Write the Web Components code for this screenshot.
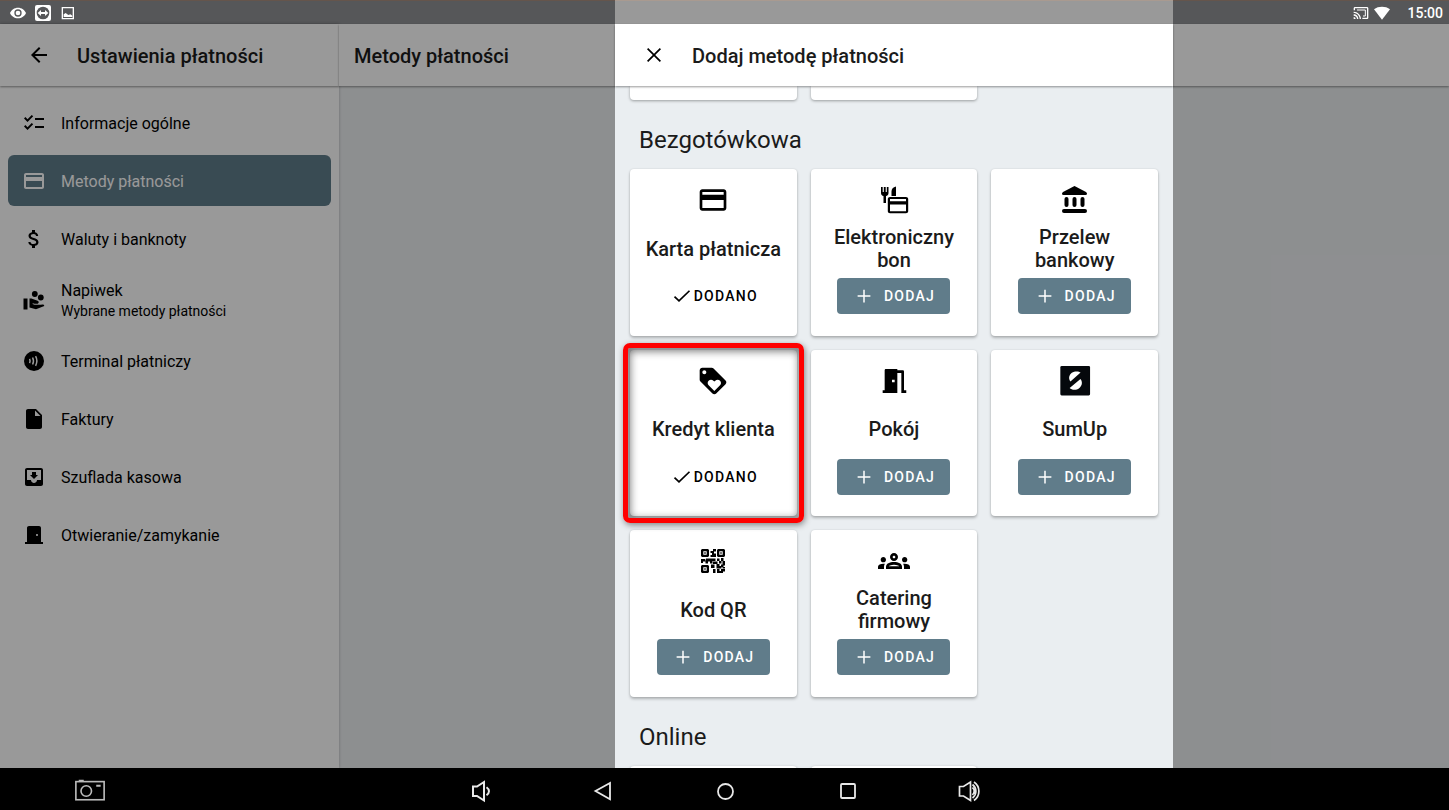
<!DOCTYPE html>
<html lang="pl">
<head>
<meta charset="utf-8">
<meta name="viewport" content="width=device-width, initial-scale=1">
<title>Ustawienia płatności</title>
<style>
    html, body {
        margin: 0;
        height: 100%;
        font-family: Roboto, "Noto Sans", sans-serif;
        color: #1b1b1b;
        background-color: #000;
    }
</style>
</head>
<body>
<pos-screen>
    <status-bar slot="status" time="15:00"></status-bar>

    <side-menu slot="menu">
        <title-bar slot="header" icon="back" action="Wstecz">Ustawienia płatności</title-bar>
        <menu-item icon="checklist">Informacje ogólne</menu-item>
        <menu-item icon="card" selected>Metody płatności</menu-item>
        <menu-item icon="dollar">Waluty i banknoty</menu-item>
        <menu-item icon="tip" note="Wybrane metody płatności">Napiwek</menu-item>
        <menu-item icon="contactless">Terminal płatniczy</menu-item>
        <menu-item icon="file">Faktury</menu-item>
        <menu-item icon="inbox">Szuflada kasowa</menu-item>
        <menu-item icon="door">Otwieranie/zamykanie</menu-item>
    </side-menu>

    <title-bar slot="page">Metody płatności</title-bar>

    <method-panel slot="panel">
        <title-bar slot="header" icon="close" action="Zamknij">Dodaj metodę płatności</title-bar>
        <card-edge side="bottom"></card-edge>
        <method-group label="Bezgotówkowa">
            <method-card icon="card" added>Karta płatnicza</method-card>
            <method-card icon="voucher">Elektroniczny bon</method-card>
            <method-card icon="bank">Przelew bankowy</method-card>
            <method-card icon="loyalty" added marked>Kredyt klienta</method-card>
            <method-card icon="room">Pokój</method-card>
            <method-card icon="sumup">SumUp</method-card>
            <method-card icon="qr">Kod QR</method-card>
            <method-card icon="groups">Catering firmowy</method-card>
        </method-group>
        <method-group label="Online"></method-group>
        <card-edge side="top"></card-edge>
    </method-panel>

    <system-nav slot="nav"></system-nav>
</pos-screen>

<script>
const ICONS = {
    back: `<path d="M20 11H7.83l5.59-5.59L12 4l-8 8 8 8 1.41-1.41L7.83 13H20v-2z"/>`,
    close: `<path d="M19 6.2 17.800 5 12 10.800 6.200 5 5 6.200 10.800 12 5 17.800 6.200 19 12 13.200 17.800 19 19 17.800 13.200 12z"/>`,
    checklist: `<path d="M22 7h-9v2h9V7zm0 8h-9v2h9v-2zM5.54 11 2 7.46l1.41-1.41 2.12 2.12 4.24-4.24 1.41 1.41L5.54 11zm0 8L2 15.46l1.41-1.41 2.12 2.12 4.24-4.24 1.41 1.41L5.54 19z"/>`,
    card: `<path d="M20 4H4c-1.11 0-1.99.89-1.99 2L2 18c0 1.11.89 2 2 2h16c1.11 0 2-.89 2-2V6c0-1.11-.89-2-2-2zm0 14H4v-6h16v6zm0-10H4V6h16v2z"/>`,
    dollar: `<path d="M11.8 10.9c-2.27-.59-3-1.2-3-2.15 0-1.09 1.01-1.85 2.7-1.85 1.78 0 2.44.85 2.5 2.1h2.21c-.07-1.72-1.12-3.3-3.21-3.81V3h-3v2.16c-1.94.42-3.5 1.68-3.5 3.61 0 2.31 1.91 3.46 4.7 4.13 2.5.6 3 1.48 3 2.41 0 .69-.49 1.79-2.7 1.79-2.06 0-2.87-.92-2.98-2.1h-2.2c.12 2.19 1.76 3.42 3.68 3.83V21h3v-2.15c1.95-.37 3.5-1.5 3.5-3.55 0-2.84-2.43-3.81-4.7-4.4z"/>`,
    tip: `<path d="M1.500 10.500h4v11h-4z"/><path d="M7.500 10.500h1.900l6.200 2.300c.7.300 1.100.8 1.100 1.500 0 .9-.7 1.500-1.600 1.500h-2.600l-1.700-.6-.3.900 2 .7h6.200l2-.3c.9 0 1.600.7 1.600 1.500l-8.300 3.300-6.500-1.800z"/><circle cx="12.800" cy="6" r="2.900"/><circle cx="18.800" cy="9.500" r="2.900"/>`,
    contactless: `<circle cx="12" cy="12" r="10"/><g fill="none" stroke="#fff" stroke-width="1.500"><path d="M7.600 9.900c.6 1.300.6 2.900 0 4.200M10.600 8.500c1.100 2.200 1.100 4.800 0 7M13.600 7.200c1.600 3 1.600 6.600 0 9.600"/></g>`,
    file: `<path d="M6 2c-1.1 0-1.99.9-1.99 2L4 20c0 1.1.89 2 1.99 2H18c1.1 0 2-.9 2-2V8l-6-6H6zm7 7V3.5L18.5 9H13z"/>`,
    inbox: `<path d="M19 3H4.99c-1.11 0-1.98.9-1.98 2L3 19c0 1.1.88 2 1.99 2H19c1.1 0 2-.9 2-2V5c0-1.1-.9-2-2-2zm0 12h-4c0 1.66-1.35 3-3 3s-3-1.34-3-3H4.99V5H19v10zm-3-5h-2V7h-4v3H8l4 4 4-4z"/>`,
    door: `<path d="M19 19V5c0-1.1-.9-2-2-2H7c-1.1 0-2 .9-2 2v14H3v2h18v-2h-2zm-4-6c-.55 0-1-.45-1-1s.45-1 1-1 1 .45 1 1-.45 1-1 1z"/>`,
    loyalty: `<path d="M21.41 11.58l-9-9C12.05 2.22 11.55 2 11 2H4c-1.1 0-2 .9-2 2v7c0 .55.22 1.05.59 1.42l9 9c.36.36.86.58 1.41.58.55 0 1.05-.22 1.41-.59l7-7c.37-.36.59-.86.59-1.41 0-.55-.23-1.06-.59-1.42zM5.5 7C4.67 7 4 6.33 4 5.5S4.67 4 5.5 4 7 4.67 7 5.5 6.33 7 5.5 7zm11.77 8.27L13 19.54l-4.27-4.27C8.28 14.81 8 14.19 8 13.5c0-1.38 1.12-2.5 2.5-2.5.69 0 1.32.28 1.77.74l.73.72.73-.73c.45-.45 1.08-.73 1.77-.73 1.38 0 2.5 1.12 2.5 2.5 0 .69-.28 1.32-.73 1.77z"/>`,
    room: `<path d="M14.500 6v15h-11v-2H5V4c0-.6.400-1 1-1h8.500v1h4c.6 0 1 .4 1 1v14h1.700v2h-3.700V6h-3zm-4 5v2h2v-2h-2z"/>`,
    groups: `<path d="M4 13c1.1 0 2-.9 2-2s-.9-2-2-2-2 .9-2 2 .9 2 2 2zm1.13 1.1c-.37-.06-.74-.1-1.13-.1-.99 0-1.93.21-2.78.58C.48 14.9 0 15.62 0 16.43V18h4.5v-1.61c0-.83.23-1.61.63-2.29zM20 13c1.1 0 2-.9 2-2s-.9-2-2-2-2 .9-2 2 .9 2 2 2zm4 3.43c0-.81-.48-1.53-1.22-1.85-.85-.37-1.79-.58-2.78-.58-.39 0-.76.04-1.13.1.4.68.63 1.46.63 2.29V18H24v-1.57zM16.24 13.65c-1.17-.52-2.61-.9-4.24-.9s-3.07.39-4.24.9C6.68 14.13 6 15.21 6 16.39V18h12v-1.61c0-1.18-.68-2.26-1.76-2.74zM8.07 16c.09-.23.13-.39.91-.69.97-.38 1.99-.56 3.02-.56s2.05.18 3.02.56c.77.3.81.46.91.69H8.07zM12 8c.55 0 1 .45 1 1s-.45 1-1 1-1-.45-1-1 .45-1 1-1m0-2c-1.66 0-3 1.34-3 3s1.34 3 3 3 3-1.34 3-3-1.34-3-3-3z"/>`,
    voucher: `<g transform="scale(.75)"><path d="M3 3h1.700v5h1.100V3h1.900v5h1.100V3h1.700v6c0 1.700-1 2.800-2.500 3.100V19H5.500v-6.900C4 11.800 3 10.700 3 9zM13.500 12V7.500c0-2.500 1.500-4.300 4.500-5V12z"/><path fill-rule="evenodd" d="M12 13h16c1.200 0 2.200.8 2.200 2v12.200c0 1.200-1 2-2.200 2H12c-1.200 0-2.200-.8-2.200-2V15c0-1.200 1-2 2.200-2zm0 2v2.200h16V15zm0 5.500v6.700h16v-6.700z"/></g>`,
    bank: `<g transform="scale(.75)"><path d="M15.500 2 27 8c1.600 1 1.200 3-.5 3h-22c-1.700 0-2.100-2-.5-3z"/><rect x="5.500" y="13" width="4" height="10" rx="2"/><rect x="13.500" y="13" width="4" height="10" rx="2"/><rect x="21.500" y="13" width="4" height="10" rx="2"/><rect x="3" y="25" width="25" height="4" rx="2"/></g>`,
    sumup: `<rect x="1" y=".8" width="22.300" height="22" rx="1" fill="#05080c"/><path fill="#fff" d="M16.200 5.700c-1.100-1-4.300-1.500-6.600.2-2.300 1.800-2.600 4.600-1 6.500zM8 17.200c1.400 1.600 4.900 1.900 7.100.2 2.400-1.900 2.700-4.900 1-6.900z"/>`,
    qr: `<g transform="scale(.75) translate(4 4)"><path fill-rule="evenodd" d="M1 0h6l1 1v6L7 8H1L0 7V1zM2.300 2.300v3.400h3.400V2.300zM17 0h6l1 1v6l-1 1h-6l-1-1V1zM18.300 2.300v3.400h3.400V2.300zM1 16h6l1 1v6l-1 1H1l-1-1v-6zM2.300 18.300v3.400h3.400v-3.400z"/><path d="M3.300 3.300h1.400v1.400H3.300zM19.300 3.300h1.400v1.400h-1.400zM3.300 19.300h1.400v1.400H3.300zM9.500 2h2.500V0h3v2.500h-2v2h2V8H9.500V6H11V4H9.500zM0 10h4v2.500H2V14H0zM5 9.500h9.500v2.500h-3v2.500H9v-2H7v2H4.500v-2H4zM16 9.500h2.500v2.500H16zM20 9h2.500v3H20zM21.500 12H24v4.500h-2.500zM18 12h2.500v2.500H18zM12 12.500h4.500v2.500H12zM10 15.500h3.500V19H10zM15.500 15h3v2h2v2.500h-5zM12 20h2.500v4H12zM20 15.500h2.500V18H20zM16 20h2.500v2h1.500v-2h4v2.500h-2V24h-6zM21.500 18H24v1.500h-2.500z"/></g>`,
    plus: `<path d="M11 3.500h2V11h7.500v2H13v7.500h-2V13H3.500v-2H11z"/>`,
    check: `<path d="M2 12.800 8 18.500 22 5" fill="none" stroke="currentColor" stroke-width="2.300"/>`,
    eye: `<path d="M12 4C6.500 4 2 7.300 0 12c2 4.700 6.500 8 12 8s10-3.300 12-8c-2-4.700-6.500-8-12-8zm0 13.500a5.500 5.500 0 1 1 0-11 5.500 5.500 0 0 1 0 11zm0-9a3.500 3.500 0 1 0 0 7 3.500 3.500 0 0 0 0-7z"/>`,
    remote: `<rect width="24" height="24" rx="3"/><circle cx="12" cy="12" r="9.500" fill="#565759"/><path d="m4 12 5-4.500v3h6v-3l5 4.500-5 4.500v-3H9v3z"/>`,
    image: `<path fill-rule="evenodd" d="M2.500 3h18.500v18.500H2.500zm2 2v14.500H19V5z"/><path d="M5.500 18v-4l3-2 4 3 3-1 3 2v2z"/>`,
    cast: `<path d="M21 3H3c-1.1 0-2 .9-2 2v3h2V5h18v14h-7v2h7c1.1 0 2-.9 2-2V5c0-1.1-.9-2-2-2zM1 18v3h3c0-1.66-1.34-3-3-3zm0-4v2c2.76 0 5 2.24 5 5h2c0-3.87-3.13-7-7-7zm0-4v2c4.97 0 9 4.03 9 9h2c0-6.08-4.93-11-11-11z"/><path d="M6 7.500h12.500v9H15" fill="none" stroke="currentColor" stroke-width="1.500"/>`,
    wifi: `<path d="M12 22 0 6.500C6.500 1.500 17.500 1.500 24 6.500z"/>`,
    camera: `<g fill="none" stroke="currentColor" stroke-width="1.300"><rect x="0.700" y="4.500" width="22.600" height="14.500"/><circle cx="9" cy="12" r="4.200"/></g><path d="M3 3h4v1.500H3zM17 7h3.500v1.500H17z"/>`,
    volumeDown: `<path d="M4 7.500h4L15 3v18.500L8 17H4zM17.500 8.300c3.300 2.300 3.300 5.700 0 8" fill="none" stroke="currentColor" stroke-width="2"/>`,
    volumeUp: `<path d="M2.500 7.500h4L13.500 3v18.500L6.500 17h-4zM15.500 8.500c2.300 2 2.300 5 0 7.500M17 3c6.500 4.500 6.500 14 0 18.500M15.500 5.500c4.500 3.500 4.500 10 0 13.500" fill="none" stroke="currentColor" stroke-width="1.700"/>`,
    navBack: `<path d="M19 4v16.200L4.500 12z" fill="none" stroke="currentColor" stroke-width="1.800"/>`,
    navHome: `<circle cx="12.500" cy="12.500" r="7.500" fill="none" stroke="currentColor" stroke-width="1.800"/>`,
    navRecent: `<rect x="6" y="5" width="14" height="14" rx="1" fill="none" stroke="currentColor" stroke-width="1.800"/>`
};

class GlyphIcon extends HTMLElement {

    constructor() {
        super();
        this.shadowDOM = this.attachShadow({ mode: "open" });
    }

    connectedCallback() {
        this.shadowDOM.innerHTML = `
        <style>
            :host {
                display: block;
                flex: none;
                width: 24px;
                height: 24px;
            }

            svg {
                display: block;
                width: 100%;
                height: 100%;
                fill: currentColor;
            }
        </style>
        <svg viewBox="0 0 24 24" aria-hidden="true">${ICONS[this.getAttribute("name")]}</svg>
        `;
    }
}

customElements.define("glyph-icon", GlyphIcon);

class PosScreen extends HTMLElement {

    constructor() {
        super();
        this.shadowDOM = this.attachShadow({ mode: "open" });
    }

    connectedCallback() {
        this.shadowDOM.innerHTML = `
        <style>
            :host {
                display: grid;
                grid-template-columns: 339px minmax(0, 1fr);
                grid-template-rows: 24px minmax(0, 1fr) 42px;
                height: 100vh;
            }

            .status {
                grid-area: 1 / 1 / 2 / 3;
            }

            .menu {
                grid-area: 2 / 1 / 3 / 2;
                z-index: 1;
                box-shadow: 0 0 3px rgba(0, 0, 0, 0.25);
            }

            .page {
                grid-area: 2 / 2 / 3 / 3;
                background-color: #eceff1;
            }

            .scrim {
                grid-area: 2 / 1 / 3 / 3;
                z-index: 2;
                background-color: rgba(0, 0, 0, 0.4);
            }

            /* the panel also covers its part of the status bar */
            .panel {
                grid-area: 1 / 2 / 3 / 3;
                z-index: 3;
                justify-self: center;
                width: 558px;
                max-width: 100%;
                min-height: 0;
            }

            .nav {
                grid-area: 3 / 1 / 4 / 3;
                z-index: 4;
            }

            .menu, .panel {
                display: grid;
            }
        </style>
        <div class="status"><slot name="status"></slot></div>
        <div class="menu"><slot name="menu"></slot></div>
        <main class="page"><slot name="page"></slot></main>
        <div class="scrim"></div>
        <div class="panel"><slot name="panel"></slot></div>
        <div class="nav"><slot name="nav"></slot></div>
        `;
    }
}

customElements.define("pos-screen", PosScreen);

class StatusBar extends HTMLElement {

    constructor() {
        super();
        this.shadowDOM = this.attachShadow({ mode: "open" });
    }

    connectedCallback() {
        this.shadowDOM.innerHTML = `
        <style>
            :host {
                display: flex;
                align-items: center;
                box-sizing: border-box;
                height: 24px;
                padding: 0 6px 0 10px;
                border-top: 1px solid #65554c;
                background-color: #565759;
                color: #fff;
                font-size: 14px;
                font-weight: 500;
            }

            glyph-icon {
                width: 16px;
                height: 16px;
            }

            .left {
                display: flex;
                gap: 9px;
                margin-right: auto;
            }

            .right {
                display: flex;
                align-items: center;
                gap: 5px;
            }

            time {
                margin-left: 12px;
                line-height: 24px;
            }
        </style>
        <div class="left">
            <glyph-icon name="eye"></glyph-icon>
            <glyph-icon name="remote"></glyph-icon>
            <glyph-icon name="image"></glyph-icon>
        </div>
        <div class="right">
            <glyph-icon name="cast"></glyph-icon>
            <glyph-icon name="wifi"></glyph-icon>
            <time>${this.getAttribute("time")}</time>
        </div>
        `;
    }
}

customElements.define("status-bar", StatusBar);

class TitleBar extends HTMLElement {

    constructor() {
        super();
        this.shadowDOM = this.attachShadow({ mode: "open" });
    }

    connectedCallback() {
        const icon = this.getAttribute("icon");
        const button = icon
            ? `<button type="button" aria-label="${this.getAttribute("action")}"><glyph-icon name="${icon}"></glyph-icon></button>`
            : "";

        this.shadowDOM.innerHTML = `
        <style>
            :host {
                display: flex;
                align-items: center;
                gap: 26px;
                box-sizing: border-box;
                height: 62px;
                padding: 0 15px;
                background-color: #fff;
                box-shadow: 0 1px 2px rgba(0, 0, 0, 0.4);
                position: relative;
                z-index: 1;
            }

            button {
                display: block;
                margin-left: 12px;
                padding: 0;
                border: 0;
                background: none;
                color: #000;
                cursor: pointer;
            }

            h1 {
                margin: 0;
                padding-top: 2px;
                font-size: 20px;
                font-weight: 500;
                line-height: 24px;
            }
        </style>
        ${button}
        <h1><slot></slot></h1>
        `;
    }
}

customElements.define("title-bar", TitleBar);

class SideMenu extends HTMLElement {

    constructor() {
        super();
        this.shadowDOM = this.attachShadow({ mode: "open" });
    }

    connectedCallback() {
        this.shadowDOM.innerHTML = `
        <style>
            :host {
                display: block;
                background-color: #fff;
            }

            nav {
                display: flex;
                flex-direction: column;
                gap: 7px;
                padding: 11px 8px;
            }
        </style>
        <slot name="header"></slot>
        <nav><slot></slot></nav>
        `;
    }
}

customElements.define("side-menu", SideMenu);

class MenuItem extends HTMLElement {

    constructor() {
        super();
        this.shadowDOM = this.attachShadow({ mode: "open" });
    }

    connectedCallback() {
        const note = this.getAttribute("note");

        this.shadowDOM.innerHTML = `
        <style>
            :host {
                display: block;
                color: #000;
            }

            a {
                display: flex;
                align-items: center;
                gap: 15px;
                box-sizing: border-box;
                min-height: 51px;
                padding: 0 14px;
                border-radius: 6px;
                color: inherit;
                font-size: 16px;
                line-height: 20px;
                text-decoration: none;
            }

            a.noted {
                min-height: 57px;
            }

            :host([selected]) a {
                background-color: #607d8b;
                color: #fff;
            }

            span {
                padding-top: 2px;
            }

            small {
                display: block;
                font-size: 14px;
            }
        </style>
        <a href="#" class="${note ? "noted" : ""}" ${this.hasAttribute("selected") ? 'aria-current="page"' : ""}>
            <glyph-icon name="${this.getAttribute("icon")}"></glyph-icon>
            <span><slot></slot>${note ? `<small>${note}</small>` : ""}</span>
        </a>
        `;
    }
}

customElements.define("menu-item", MenuItem);

class MethodPanel extends HTMLElement {

    constructor() {
        super();
        this.shadowDOM = this.attachShadow({ mode: "open" });
    }

    connectedCallback() {
        this.shadowDOM.innerHTML = `
        <style>
            :host {
                display: flex;
                flex-direction: column;
                min-height: 0;
            }

            .top {
                flex: none;
                box-sizing: border-box;
                height: 24px;
                border-top: 1px solid #a99a90;
                background-color: #999;
            }

            .body {
                flex: 1;
                min-height: 0;
                overflow: hidden;
                padding: 0 15px;
                background-color: #eaeef1;
            }
        </style>
        <div class="top"></div>
        <slot name="header"></slot>
        <div class="body"><slot></slot></div>
        `;
    }
}

customElements.define("method-panel", MethodPanel);

/* the visible edge of a row that is scrolled out of the panel */
class CardEdge extends HTMLElement {

    constructor() {
        super();
        this.shadowDOM = this.attachShadow({ mode: "open" });
    }

    connectedCallback() {
        this.shadowDOM.innerHTML = `
        <style>
            :host {
                display: grid;
                grid-template-columns: repeat(3, minmax(0, 1fr));
                gap: 14px;
            }

            div {
                height: 14px;
                border-radius: 0 0 4px 4px;
                background-color: #fff;
                box-shadow: 0 1px 3px rgba(0, 0, 0, 0.35);
            }

            :host([side="top"]) div {
                border-radius: 4px 4px 0 0;
            }
        </style>
        <div></div>
        <div></div>
        `;
    }
}

customElements.define("card-edge", CardEdge);

class MethodGroup extends HTMLElement {

    constructor() {
        super();
        this.shadowDOM = this.attachShadow({ mode: "open" });
    }

    connectedCallback() {
        this.shadowDOM.innerHTML = `
        <style>
            :host {
                display: block;
            }

            h2 {
                margin: 0;
                padding: 24px 9px 13px;
                font-size: 24px;
                font-weight: 400;
                line-height: 32px;
            }

            .grid {
                display: grid;
                grid-template-columns: repeat(3, minmax(0, 1fr));
                gap: 14px;
            }
        </style>
        <h2>${this.getAttribute("label")}</h2>
        <div class="grid"><slot></slot></div>
        `;
    }
}

customElements.define("method-group", MethodGroup);

class MethodCard extends HTMLElement {

    constructor() {
        super();
        this.shadowDOM = this.attachShadow({ mode: "open" });
    }

    connectedCallback() {
        const action = this.hasAttribute("added")
            ? `<div class="state"><glyph-icon name="check"></glyph-icon>DODANO</div>`
            : `<button type="button"><glyph-icon name="plus"></glyph-icon>DODAJ</button>`;

        this.shadowDOM.innerHTML = `
        <style>
            :host {
                display: flex;
                flex-direction: column;
                align-items: center;
                box-sizing: border-box;
                aspect-ratio: 1;
                padding: 15px 15px 0;
                border-radius: 4px;
                background-color: #fff;
                box-shadow: 0 2px 3px rgba(0, 0, 0, 0.25), 0 0 2px rgba(0, 0, 0, 0.12);
                position: relative;
            }

            .icon {
                width: 32px;
                height: 32px;
                color: #000;
            }

            h3 {
                display: flex;
                align-items: center;
                height: 46px;
                margin: 10px 0 6px;
                font-size: 20px;
                font-weight: 500;
                line-height: 23px;
                text-align: center;
            }

            button, .state {
                display: flex;
                align-items: center;
                justify-content: center;
                height: 36px;
                font-family: inherit;
                font-size: 14px;
                font-weight: 500;
                letter-spacing: 0.09em;
            }

            button {
                gap: 11px;
                width: 113px;
                padding: 0 0 0 2px;
                border: 0;
                border-radius: 4px;
                background-color: #607c8a;
                color: #fff;
                cursor: pointer;
            }

            button glyph-icon, .state glyph-icon {
                width: 18px;
                height: 18px;
            }

            .state {
                gap: 3px;
                padding-left: 4px;
                color: #000;
            }

            :host([marked])::after {
                content: "";
                position: absolute;
                inset: -7px;
                border: 5px solid #f00;
                border-radius: 7px;
                box-shadow: 1px 2px 6px rgba(0, 0, 0, 0.45), inset 1px 2px 8px 1px rgba(0, 0, 0, 0.55);
                z-index: 1;
                pointer-events: none;
            }
        </style>
        <glyph-icon class="icon" name="${this.getAttribute("icon")}"></glyph-icon>
        <h3><span><slot></slot></span></h3>
        ${action}
        `;
    }
}

customElements.define("method-card", MethodCard);

class SystemNav extends HTMLElement {

    constructor() {
        super();
        this.shadowDOM = this.attachShadow({ mode: "open" });
    }

    connectedCallback() {
        this.shadowDOM.innerHTML = `
        <style>
            :host {
                display: grid;
                grid-template-columns: 1fr auto 1fr;
                align-items: center;
                height: 42px;
                padding-top: 4px;
                box-sizing: border-box;
                background-color: #000;
                color: #e8e8e8;
            }

            button {
                display: block;
                padding: 0;
                border: 0;
                background: none;
                color: inherit;
            }

            .shot {
                justify-self: start;
                margin-left: 75px;
                color: #bbb;
            }

            .shot glyph-icon {
                width: 30px;
                height: 30px;
            }

            .keys {
                display: flex;
                gap: 98px;
            }
        </style>
        <button class="shot" type="button" aria-label="Zrzut ekranu"><glyph-icon name="camera"></glyph-icon></button>
        <div class="keys">
            <button type="button" aria-label="Ciszej"><glyph-icon name="volumeDown"></glyph-icon></button>
            <button type="button" aria-label="Wstecz"><glyph-icon name="navBack"></glyph-icon></button>
            <button type="button" aria-label="Ekran główny"><glyph-icon name="navHome"></glyph-icon></button>
            <button type="button" aria-label="Ostatnie"><glyph-icon name="navRecent"></glyph-icon></button>
            <button type="button" aria-label="Głośniej"><glyph-icon name="volumeUp"></glyph-icon></button>
        </div>
        `;
    }
}

customElements.define("system-nav", SystemNav);
</script>
</body>
</html>
